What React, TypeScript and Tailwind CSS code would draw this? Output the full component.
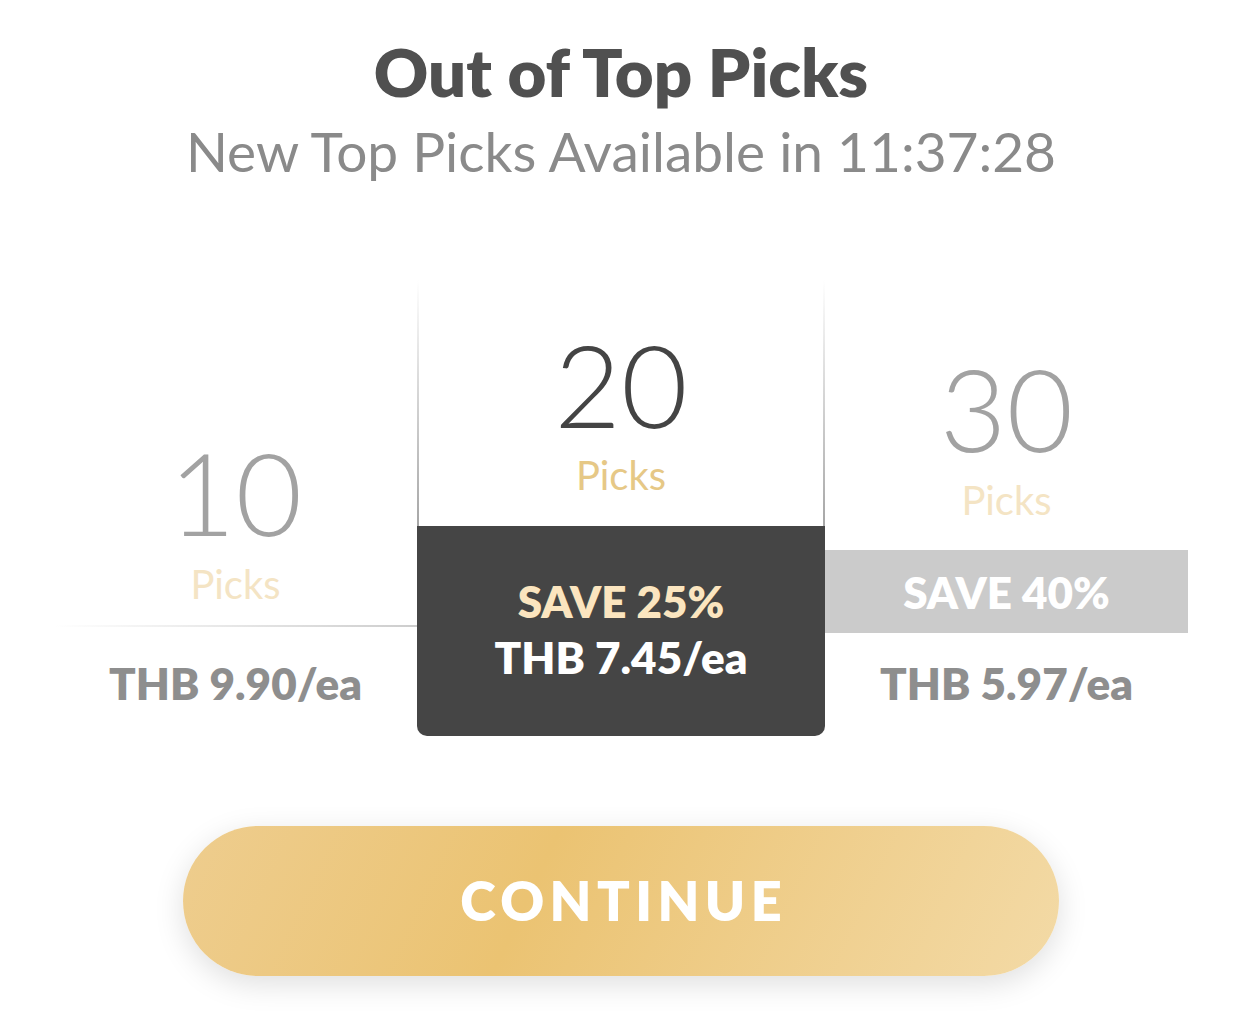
import React from "react";

const FONT = "font-['Lato','Noto_Sans',sans-serif]";

function SideNumber({ value }: { value: string }) {
  return (
    <>
      <div className="text-[115px] leading-none font-light text-[#a2a2a2]">{value}</div>
      <div className="mt-[15px] text-[40px] leading-none text-[#f4e4c4]">Picks</div>
    </>
  );
}

export default function App() {
  return (
    <div className={`${FONT} w-[1242px] h-[1032px] bg-white flex flex-col items-center pt-[38px]`}>
      <h1 className="text-[67px] leading-none font-extrabold text-[#505050]">Out of Top Picks</h1>
      <p className="mt-[19px] text-[55px] leading-none text-[#8a8a8a]">
        New Top Picks Available in 11:37:28
      </p>

      {/* Plans */}
      <div className="mt-[101px] flex items-end w-full px-[54px]">
        {/* 10 picks */}
        <div className="w-[363px] flex flex-col items-center">
          <SideNumber value="10" />
          <div className="mt-[21px] h-[2px] w-full bg-linear-to-r from-transparent to-[#cdcdcd]" />
          <div className="h-[109px] pt-[34px] text-[44px] leading-none font-extrabold text-[#8e8e8e]">
            THB 9.90/ea
          </div>
        </div>

        {/* 20 picks, selected */}
        <div className="w-[408px] flex flex-col">
          <div className="px-[2px] bg-linear-to-b from-transparent to-[#a6a6a6]">
            <div className="bg-white flex flex-col items-center pt-[46px] pb-[31px]">
              <div className="text-[115px] leading-none font-light text-[#444444]">20</div>
              <div className="mt-[14px] text-[40px] leading-none text-[#e6c886]">Picks</div>
            </div>
          </div>
          <div className="h-[210px] bg-[#454545] rounded-b-[10px] flex flex-col items-center pt-[53px]">
            <div className="text-[44px] leading-none font-extrabold text-[#fbe5bf]">SAVE 25%</div>
            <div className="mt-[12px] text-[44px] leading-none font-extrabold text-white">THB 7.45/ea</div>
          </div>
        </div>

        {/* 30 picks */}
        <div className="w-[363px] flex flex-col items-center">
          <SideNumber value="30" />
          <div className="mt-[30px] h-[83px] w-full bg-[#cbcbcb] flex items-center justify-center">
            <span className="text-[44px] leading-none font-extrabold text-white">SAVE 40%</span>
          </div>
          <div className="h-[103px] pt-[28px] text-[44px] leading-none font-extrabold text-[#8e8e8e]">
            THB 5.97/ea
          </div>
        </div>
      </div>

      <button className="mt-[90px] w-[876px] h-[150px] rounded-full bg-linear-115 from-[#eecd8e] via-[#ebc372] via-40% to-[#f3daa6] shadow-[0_8px_30px_rgba(0,0,0,0.13)] flex items-center justify-center">
        <span className="pl-[0.1em] text-[54px] leading-none font-extrabold tracking-[0.1em] text-white">
          CONTINUE
        </span>
      </button>
    </div>
  );
}
